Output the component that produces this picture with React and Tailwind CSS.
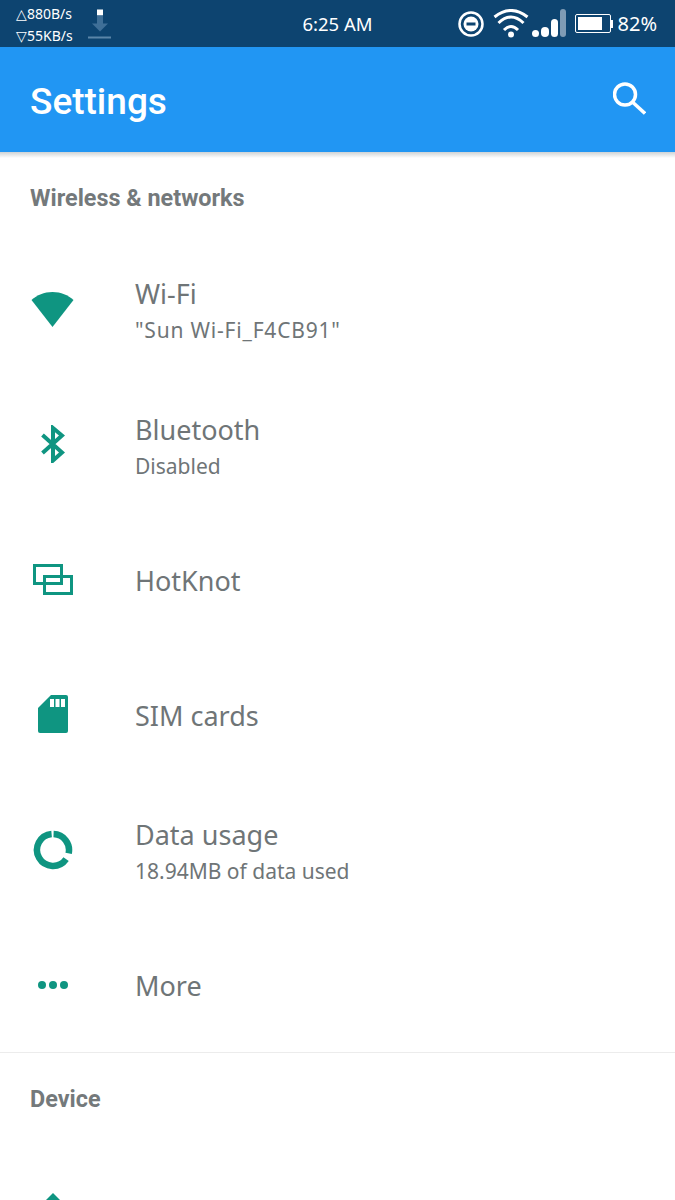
const WifiIcon = () => (
  <svg className="mb-[5px]" width="43" height="35" viewBox="0 0 43 35" fill="#0f9581">
    <path d="M0.500 8C6 3 13 0 21.500 0S37 3 42.500 8L21.500 35Z" />
  </svg>
);

const BluetoothIcon = () => (
  <svg className="mb-[6px]" width="24" height="38" viewBox="0 0 24 38" fill="none" stroke="#0f9581" strokeWidth="4">
    <path d="M1.500 10L21 27.500 12 35.500V3L21 10.500 1.500 28" />
  </svg>
);

const HotKnotIcon = () => (
  <svg className="mb-[3px]" width="40" height="31" viewBox="0 0 40 31" fill="none" stroke="#0f9581" strokeWidth="3">
    <rect x="1.500" y="1.500" width="27" height="18" />
    <rect x="11.500" y="12.500" width="27" height="17" />
  </svg>
);

const SimIcon = () => (
  <svg className="mb-[4px]" width="30" height="38" viewBox="0 0 30 38">
    <path fill="#0f9581" d="M13 0H28Q30 0 30 2V36Q30 38 28 38H2Q0 38 0 36V13Z" />
    <rect x="12" y="4" width="4" height="8" fill="#fff" />
    <rect x="17.500" y="4" width="4" height="8" fill="#fff" />
    <rect x="23" y="4" width="4" height="8" fill="#fff" />
  </svg>
);

const DataIcon = () => (
  <svg width="40" height="40" viewBox="0 0 40 40" fill="none" stroke="#0f9581" strokeWidth="6.500">
    <path d="M20.560 4A16 16 0 0 1 35.650 23.330" />
    <path d="M33.100 29.180A16 16 0 1 1 18.600 4.060" />
  </svg>
);

const MoreIcon = () => (
  <svg width="32" height="10" viewBox="0 0 32 10" fill="#0f9581">
    <circle cx="5" cy="5" r="4" />
    <circle cx="16" cy="5" r="4" />
    <circle cx="27" cy="5" r="4" />
  </svg>
);

const DeviceIcon = () => (
  <svg width="40" height="40" viewBox="0 0 40 40" fill="#0f9581">
    <path d="M20 0L40 20 20 40 0 20Z" />
  </svg>
);

const SearchIcon = () => (
  <svg className="mb-[3px]" width="33" height="33" viewBox="0 0 33 33" fill="none" stroke="#fff" strokeWidth="3.500">
    <circle cx="12" cy="12.500" r="10.500" />
    <path d="M20 20.500L32 31.500" />
  </svg>
);

const rows = [
  { icon: <WifiIcon />, title: 'Wi-Fi', sub: '"Sun Wi-Fi_F4CB91"', subClass: 'tracking-[0.8px]' },
  { icon: <BluetoothIcon />, title: 'Bluetooth', sub: 'Disabled', textClass: 'mt-[2px]' },
  { icon: <HotKnotIcon />, title: 'HotKnot' },
  { icon: <SimIcon />, title: 'SIM cards' },
  { icon: <DataIcon />, title: 'Data usage', sub: '18.94MB of data used', textClass: 'mt-[5px]' },
  { icon: <MoreIcon />, title: 'More', textClass: 'mt-[2px]' },
];

const Row = ({ icon, title, sub, subClass, textClass }) => (
  <div className="flex h-[134.5px] items-center">
    <div className="ml-[30px] flex w-[45px] justify-center">{icon}</div>
    <div className={`ml-[60px] text-[#6f7577] ${textClass || ''}`}>
      <div className="text-[27px] leading-[36px]">{title}</div>
      {sub && <div className={`text-[21px] leading-[36px] ${subClass || ''}`}>{sub}</div>}
    </div>
  </div>
);

const StatusBar = () => (
  <div className="flex h-[47px] items-center bg-[#0d4470] text-white">
    <div className="flex w-[302px] shrink-0 items-center">
      <div className="ml-[16px] mt-[2px] w-[60px] text-[14px] leading-[22px]">
        <div>△880B/s</div>
        <div>▽55KB/s</div>
      </div>
      <svg className="ml-[12px]" width="24" height="36" viewBox="0 0 24 36">
        <rect x="9" y="3.500" width="6" height="6" fill="#fff" />
        <path d="M9 9.500H15V17.500H20L12 25.500 4 17.500H9Z" fill="#3f6f97" />
        <rect x="0" y="30.500" width="23" height="2" fill="#5a85a8" />
      </svg>
    </div>
    <div className="w-[71px] shrink-0 text-center text-[18.500px] whitespace-nowrap">6:25 AM</div>
    <div className="flex flex-1 items-center justify-end pr-[18px]">
      <svg width="28" height="28" viewBox="0 0 28 28" fill="none">
        <circle cx="14" cy="14" r="11.500" stroke="#fff" strokeWidth="2.500" />
        <circle cx="14" cy="14" r="7.500" fill="#fff" />
        <rect x="9.500" y="12.500" width="9" height="3" fill="#0d4470" />
      </svg>
      <svg className="ml-[8px]" width="36" height="30" viewBox="0 0 36 30" fill="none" stroke="#fff" strokeWidth="3">
        <path d="M1.500 8Q18 -5 34.500 8" />
        <path d="M5.500 14Q18 2 30.500 14" />
        <path d="M11 21Q18 14 25 21" />
        <circle cx="18" cy="25.500" r="3" fill="#fff" stroke="none" />
      </svg>
      <svg className="ml-[3px]" width="35" height="30" viewBox="0 0 35 30">
        <circle cx="3.500" cy="24.500" r="3.500" fill="#fff" />
        <rect x="9" y="18" width="8" height="10" rx="4" fill="#fff" />
        <rect x="19" y="10" width="7" height="18" rx="3.500" fill="#fff" />
        <rect x="28" y="0" width="6" height="28" rx="3" fill="#7f9cb5" />
      </svg>
      <div className="ml-[8px] flex h-[19px] w-[36px] items-center rounded-[2px] border border-white p-[2px]">
        <div className="h-full w-[82%] bg-white" />
      </div>
      <div className="h-[8px] w-[2px] bg-white" />
      <div className="ml-[5px] text-[20px]">82%</div>
    </div>
  </div>
);

export default function App() {
  return (
    <div className="h-[1200px] overflow-hidden bg-white font-['Noto_Sans',sans-serif]">
      <StatusBar />
      <div className="flex h-[105px] items-center justify-between bg-[#2196f3] pl-[30px] pr-[29px] font-['Roboto',sans-serif] text-white">
        <div className="mt-[4px] text-[37px] font-medium">Settings</div>
        <SearchIcon />
      </div>
      <div className="h-[6px] bg-gradient-to-b from-[#cfd3d5] to-white" />
      <div className="flex h-[87px] items-start pl-[30px] pt-[24px] font-['Roboto',sans-serif] text-[23.400px] leading-[32px] font-bold text-[#74797b]">
        Wireless &amp; networks
      </div>
      {rows.map((row) => (
        <Row key={row.title} {...row} />
      ))}
      <div className="h-px bg-[#ececec]" />
      <div className="flex h-[92px] items-start pl-[30px] pt-[30px] font-['Roboto',sans-serif] text-[23.400px] leading-[32px] font-bold text-[#74797b]">
        Device
      </div>
      <div className="flex h-[135px] items-center">
        <div className="ml-[30px] flex w-[45px] justify-center">
          <DeviceIcon />
        </div>
      </div>
    </div>
  );
}
